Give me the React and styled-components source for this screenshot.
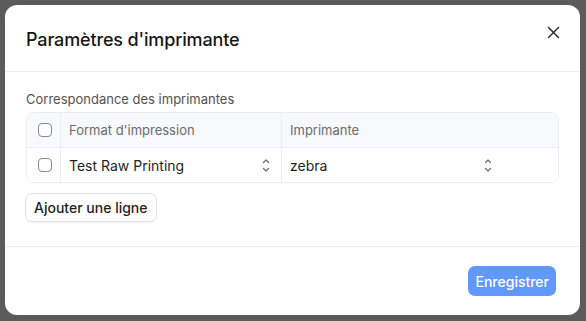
import React from 'react';
import styled, { createGlobalStyle } from 'styled-components';

const GlobalStyle = createGlobalStyle`
  html, body {
    margin: 0;
    padding: 0;
    background: #5b5b5b;
    font-family: Inter, "Noto Sans", sans-serif;
    -webkit-font-smoothing: antialiased;
  }
`;

const Backdrop = styled.div`
  width: 586px;
  height: 321px;
  padding: 5px 0 0 5px;
  box-sizing: border-box;
  overflow: hidden;
`;

const Modal = styled.div`
  width: 575px;
  height: 310px;
  background: #ffffff;
  border-radius: 12px;
  display: flex;
  flex-direction: column;
  overflow: hidden;
`;

const Header = styled.div`
  height: 66px;
  display: flex;
  align-items: center;
  justify-content: space-between;
  padding: 0 16px 0 21px;
  border-bottom: 1px solid #ededed;
  flex-shrink: 0;
`;

const Title = styled.h3`
  margin: 0;
  font-size: 18px;
  font-weight: 500;
  color: #171717;
  letter-spacing: -0.15px;
  padding-top: 2px;
`;

const CloseButton = styled.button`
  border: none;
  background: none;
  padding: 0;
  width: 22px;
  height: 22px;
  display: flex;
  align-items: center;
  justify-content: center;
  margin-top: -12px;
  cursor: pointer;
`;

const Body = styled.div`
  flex: 1;
  padding: 19px 21px 0;
  border-bottom: 1px solid #ededed;
`;

const FieldLabel = styled.div`
  font-size: 13px;
  line-height: 16px;
  color: #525252;
  margin-bottom: 5px;
`;

const Grid = styled.div`
  border: 1px solid #ebedf0;
  border-radius: 8px;
  overflow: hidden;
`;

const GridRow = styled.div`
  display: grid;
  grid-template-columns: 33px 221px 1fr;
  height: 34px;
  background: ${p => (p.$head ? '#f8f9fc' : '#ffffff')};
  border-top: ${p => (p.$head ? 'none' : '1px solid #ebedf0')};
`;

const Cell = styled.div`
  display: flex;
  align-items: center;
  justify-content: ${p => (p.$center ? 'center' : 'space-between')};
  padding: 0 ${p => p.$right || 0}px 0 ${p => (p.$center ? 0 : 8)}px;
  border-left: ${p => (p.$first ? 'none' : '1px solid #ebedf0')};
  font-size: ${p => (p.$head ? '13px' : '14px')};
  color: ${p => (p.$head ? '#6b6b6b' : '#1f1f1f')};
`;

const Check = styled.span`
  width: 14px;
  height: 14px;
  box-sizing: border-box;
  border: 1px solid #8a8a8a;
  border-radius: 4px;
  background: #fff;
  margin-left: 2px;
`;

const AddButton = styled.button`
  margin-top: 10px;
  height: 29px;
  padding: 0 8px;
  margin-left: -1px;
  font-family: inherit;
  font-size: 14px;
  font-weight: 500;
  color: #1f1f1f;
  background: #ffffff;
  border: 1px solid #e2e2e2;
  border-radius: 7px;
  box-shadow: 0 1px 1px rgba(0, 0, 0, 0.04);
`;

const Footer = styled.div`
  height: 68px;
  display: flex;
  align-items: center;
  justify-content: flex-end;
  padding: 0 24px 0 0;
  flex-shrink: 0;
`;

const PrimaryButton = styled.button`
  height: 30px;
  padding: 0 7px;
  font-family: inherit;
  font-size: 14px;
  font-weight: 500;
  color: #ffffff;
  background: #6198fb;
  border: none;
  border-radius: 7px;
`;

const UpDown = () => (
  <svg width="8" height="15" viewBox="0 0 8 15" fill="none" stroke="#6e6e6e" strokeWidth="1.2" strokeLinecap="round" strokeLinejoin="round">
    <path d="M1.5 4.5 L4 2 L6.5 4.5" />
    <path d="M1.5 10.5 L4 13 L6.5 10.5" />
  </svg>
);

const CloseIcon = () => (
  <svg width="13" height="13" viewBox="0 0 13 13" fill="none" stroke="#2b2b2b" strokeWidth="1.5" strokeLinecap="round">
    <path d="M1.5 1.5 L11.5 11.5" />
    <path d="M11.5 1.5 L1.5 11.5" />
  </svg>
);

const App = () => (
  <>
    <GlobalStyle />
    <Backdrop>
      <Modal>
        <Header>
          <Title>Paramètres d'imprimante</Title>
          <CloseButton aria-label="Fermer">
            <CloseIcon />
          </CloseButton>
        </Header>
        <Body>
          <FieldLabel>Correspondance des imprimantes</FieldLabel>
          <Grid>
            <GridRow $head>
              <Cell $center $first><Check /></Cell>
              <Cell $head>Format d'impression</Cell>
              <Cell $head>Imprimante</Cell>
            </GridRow>
            <GridRow>
              <Cell $center $first><Check /></Cell>
              <Cell $right={11}>Test Raw Printing <UpDown /></Cell>
              <Cell $right={66}>zebra <UpDown /></Cell>
            </GridRow>
          </Grid>
          <AddButton>Ajouter une ligne</AddButton>
        </Body>
        <Footer>
          <PrimaryButton>Enregistrer</PrimaryButton>
        </Footer>
      </Modal>
    </Backdrop>
  </>
);

export default App;
